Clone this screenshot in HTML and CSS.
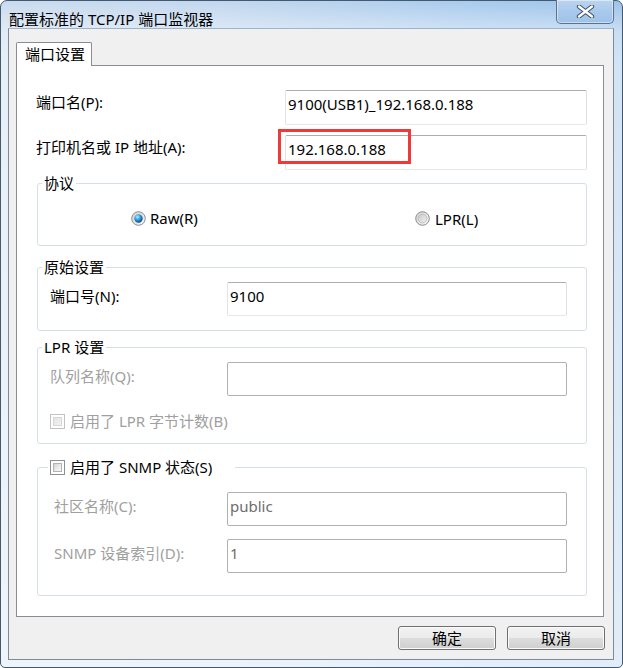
FILE: index.html
```html
<!DOCTYPE html>
<html lang="zh-CN">
<head>
<meta charset="utf-8">
<title>配置标准的 TCP/IP 端口监视器</title>
<link rel="stylesheet" href="styles.css">
</head>
<body>
<div class="window">
  <div class="titlebar">
    <span class="title">配置标准的 TCP/IP 端口监视器</span>
    <div class="close">
      <svg width="19" height="13" viewBox="0 0 19 13">
        <path d="M3 1.5 L16 11.5 M16 1.5 L3 11.5" stroke="#3b4f66" stroke-width="4.4" stroke-linecap="round"/>
        <path d="M3 1.5 L16 11.5 M16 1.5 L3 11.5" stroke="#ffffff" stroke-width="2.4" stroke-linecap="round"/>
      </svg>
    </div>
  </div>
  <div class="client">
    <div class="tabs"><div class="tab">端口设置</div></div>
    <div class="panel">
      <div class="row">
        <span class="lbl">端口名(P):</span>
        <div class="edit wide">9100(USB1)_192.168.0.188</div>
      </div>
      <div class="row row2">
        <span class="lbl">打印机名或 IP 地址(A):</span>
        <div class="edit wide hl">192.168.0.188<span class="mark"></span></div>
      </div>

      <fieldset class="fs fs-proto">
        <legend class="lg">协议</legend>
        <div class="radios">
          <div class="opt first">
            <svg class="radio" width="15" height="15" viewBox="0 0 15 15">
              <defs>
                <linearGradient id="rg1" x1="0" y1="0" x2="1" y2="1"><stop offset="0" stop-color="#cfcfcf"/><stop offset="1" stop-color="#fafafa"/></linearGradient>
                <radialGradient id="rb1" cx="0.38" cy="0.32" r="0.75"><stop offset="0" stop-color="#c4f1ff"/><stop offset="0.4" stop-color="#37a6e6"/><stop offset="1" stop-color="#083c73"/></radialGradient>
              </defs>
              <circle cx="7.5" cy="7.5" r="6.8" fill="url(#rg1)" stroke="#8b8d90"/>
              <circle cx="7.5" cy="7.5" r="4.2" fill="url(#rb1)"/>
            </svg>
            <span>Raw(R)</span>
          </div>
          <div class="opt">
            <svg class="radio" width="15" height="15" viewBox="0 0 15 15">
              <defs>
                <linearGradient id="rg2" x1="0" y1="0" x2="1" y2="1"><stop offset="0" stop-color="#cfcfcf"/><stop offset="1" stop-color="#fafafa"/></linearGradient>
                <linearGradient id="ri2" x1="0" y1="0" x2="1" y2="1"><stop offset="0" stop-color="#c8c8c8"/><stop offset="1" stop-color="#f2f2f2"/></linearGradient>
              </defs>
              <circle cx="7.5" cy="7.5" r="6.8" fill="url(#rg2)" stroke="#8b8d90"/>
              <circle cx="7.5" cy="7.5" r="4.3" fill="url(#ri2)" stroke="#b9b9b9" stroke-width="0.8"/>
            </svg>
            <span class="lpr">LPR(L)</span>
          </div>
        </div>
      </fieldset>

      <fieldset class="fs fs-raw">
        <legend class="lg">原始设置</legend>
        <div class="fbody">
          <div class="frow">
            <span class="flbl">端口号(N):</span>
            <div class="edit narrow">9100</div>
          </div>
        </div>
      </fieldset>

      <fieldset class="fs fs-lpr">
        <legend class="lg">LPR 设置</legend>
        <div class="fbody">
          <div class="frow">
            <span class="flbl dis">队列名称(Q):</span>
            <div class="edit narrow disabled"></div>
          </div>
          <div class="chkrow dis">
            <span class="cb cb-dis"></span>
            <span>启用了 LPR 字节计数(B)</span>
          </div>
        </div>
      </fieldset>

      <fieldset class="fs fs-snmp">
        <legend class="lg lg-snmp"><span class="chk"><span class="cb"></span><span>启用了 SNMP 状态(S)</span></span></legend>
        <div class="fbody snmp">
          <div class="frow">
            <span class="flbl dis">社区名称(C):</span>
            <div class="edit narrow disabled">public</div>
          </div>
          <div class="frow frow2">
            <span class="flbl dis">SNMP 设备索引(D):</span>
            <div class="edit narrow disabled">1</div>
          </div>
        </div>
      </fieldset>
    </div>
    <div class="buttons">
      <div class="btn">确定</div>
      <div class="btn">取消</div>
    </div>
  </div>
</div>
</body>
</html>
```
FILE: styles.css
```css
html, body {
  margin: 0;
  padding: 0;
  background: #ffffff;
}
body {
  font-family: "Noto Sans", "Noto Sans CJK SC", sans-serif;
  font-size: 15px;
  line-height: 18px;
  color: #000;
}
.window {
  width: 623px;
  height: 668px;
  box-sizing: border-box;
  border: 1px solid #44586f;
  border-radius: 7px 7px 5px 5px;
  padding: 0 8px 7px 7px;
  display: flex;
  flex-direction: column;
  background:
    linear-gradient(180deg, rgba(255,255,255,0) 0px, rgba(255,255,255,0.45) 30px, rgba(255,255,255,0.55) 60px, rgba(255,255,255,0.7) 100%),
    linear-gradient(90deg, #c9dbee 0%, #c2d7ee 35%, #a9cbed 75%, #9cc2e9 100%);
}
.titlebar {
  height: 29px;
  display: flex;
  justify-content: space-between;
  align-items: flex-start;
}
.title {
  padding-top: 9px;
  padding-left: 1px;
  font-size: 15px;
  line-height: 18px;
  white-space: nowrap;
}
.close {
  width: 58px;
  height: 24px;
  box-sizing: border-box;
  margin-top: -1px;
  border: 1px solid #5e7189;
  border-top: none;
  border-radius: 0 0 5px 5px;
  background: linear-gradient(180deg, #bcd4ee 0%, #a9c9ec 50%, #9ec2e8 100%);
  box-shadow: inset 0 0 0 1px rgba(255,255,255,0.45);
  display: flex;
  align-items: center;
  justify-content: center;
}
.client {
  flex: 1;
  border: 1px solid #7d8a99;
  border-top-color: #9fb3c8;
  background: #f0f0f0;
  padding: 13px 8px 9px 7px;
  display: flex;
  flex-direction: column;
}
.tabs {
  display: flex;
}
.tab {
  width: 76px;
  height: 24px;
  box-sizing: border-box;
  border: 1px solid #898c95;
  border-bottom: none;
  border-radius: 2px 2px 0 0;
  background: #ffffff;
  padding: 2px 0 0 8px;
  margin-bottom: -1px;
  position: relative;
  z-index: 1;
  white-space: nowrap;
}
.panel {
  border: 1px solid #898c95;
  background: #ffffff;
  padding: 24px 16px 20px 19px;
  margin-right: 1px;
  display: flex;
  flex-direction: column;
}
.row {
  display: flex;
  justify-content: space-between;
  align-items: flex-start;
}
.row2 {
  margin-top: 10px;
}
.lbl {
  margin-top: 3px;
  white-space: nowrap;
}
.edit {
  box-sizing: border-box;
  border: 1px solid;
  border-color: #abadb3 #dbdfe6 #e3e9ef #e2e3ea;
  border-radius: 2px;
  background: #fff;
  padding: 4px 2px 0 2px;
  line-height: 18px;
  white-space: nowrap;
}
.edit.wide {
  width: 302px;
  height: 35px;
}
.edit.narrow {
  width: 340px;
  height: 34px;
}
.edit.disabled {
  border-color: #adb2b5;
  color: #6d6d6d;
}
.edit.hl {
  position: relative;
}
.mark {
  position: absolute;
  left: -8px;
  top: -7px;
  width: 133px;
  height: 35px;
  box-sizing: border-box;
  border: 3px solid #f03a3a;
}
.fs {
  margin: 0 0 0 1px;
  padding: 0;
  min-width: 0;
  border: 1px solid #d5dfe5;
  border-radius: 3px;
}
.lg {
  padding: 0 2px;
  margin-left: 4px;
  line-height: 18px;
  white-space: nowrap;
}
.fs-proto {
  margin-top: 4px;
}
.fs-raw {
  margin-top: 12px;
}
.fs-lpr {
  margin-top: 7px;
}
.fs-snmp {
  margin-top: 14px;
}
.radios {
  display: flex;
  padding: 16px 0 17px 93px;
}
.opt {
  display: flex;
  align-items: center;
  gap: 4px;
}
.opt.first {
  width: 284px;
}
.opt .lpr {
  margin-left: 1px;
  margin-top: 2px;
}
.radio {
  display: block;
  flex: none;
}
.fbody {
  padding: 6px 19px 14px 12px;
}
.fs-lpr .fbody {
  padding-bottom: 13px;
}
.fbody.snmp {
  padding: 16px 19px 22px 16px;
}
.frow {
  display: flex;
  justify-content: space-between;
  align-items: flex-start;
}
.frow2 {
  margin-top: 13px;
}
.flbl {
  margin-top: 5px;
  white-space: nowrap;
}
.dis {
  color: #a0a0a0;
}
.chkrow {
  margin-top: 16px;
  display: flex;
  align-items: center;
  gap: 5px;
  height: 18px;
}
.cb {
  width: 15px;
  height: 15px;
  box-sizing: border-box;
  border: 1px solid #8e8f8f;
  background: #ffffff;
  padding: 2px;
  display: block;
  flex: none;
}
.cb::after {
  content: "";
  display: block;
  width: 100%;
  height: 100%;
  box-sizing: border-box;
  border: 1px solid #b3b3b3;
  background: linear-gradient(135deg, #d2d2d2 0%, #eeeeee 60%, #f8f8f8 100%);
}
.cb-dis {
  border-color: #c2c2c2;
}
.cb-dis::after {
  border-color: #d6d6d6;
  background: linear-gradient(135deg, #e4e4e4 0%, #f2f2f2 100%);
}
.lg-snmp {
  margin-left: 10px;
  padding: 0 23px 0 2px;
}
.chk {
  display: inline-flex;
  align-items: center;
  gap: 5px;
  height: 18px;
  vertical-align: top;
}
.buttons {
  margin-top: 9px;
  display: flex;
  justify-content: flex-end;
  gap: 11px;
}
.btn {
  width: 98px;
  height: 24px;
  box-sizing: border-box;
  border: 1px solid #707070;
  border-radius: 3px;
  background: linear-gradient(180deg, #f2f2f2 0%, #ebebeb 50%, #dddddd 50%, #cfcfcf 100%);
  box-shadow: inset 0 0 0 1px #fbfbfb;
  text-align: center;
  line-height: 22px;
}
```
